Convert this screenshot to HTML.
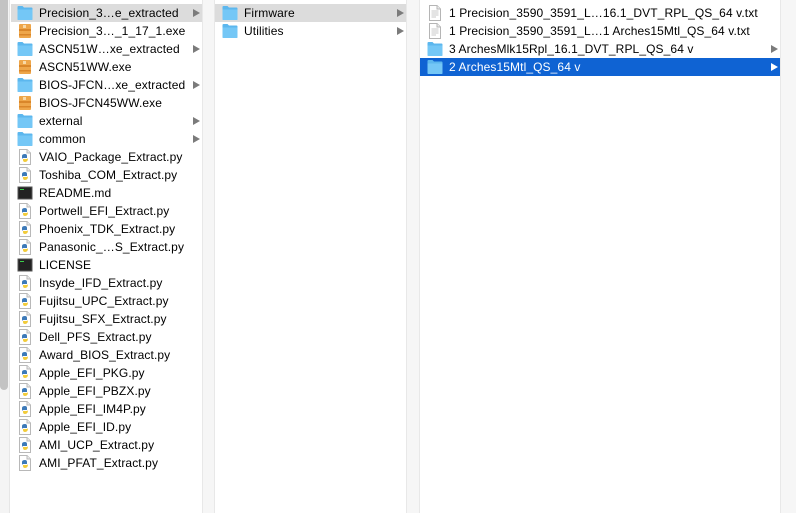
<!DOCTYPE html>
<html><head><meta charset="utf-8"><style>
*{margin:0;padding:0;box-sizing:border-box}
body{width:796px;height:513px;overflow:hidden;background:#fff;font-family:"Lucida Grande","Liberation Sans",sans-serif;font-size:12px;letter-spacing:0.1px;color:#000;position:relative}
.g{position:absolute;top:0;height:513px;background:#f6f6f6;border-left:1px solid #e8e8e8;border-right:1px solid #e8e8e8}
.row{position:absolute;height:18px;line-height:18px;white-space:nowrap}
.row.sel{background:#dcdcdc}
.row.blue{background:#0f63d3;color:#fff}
.row svg{position:absolute;top:1px}
.row span{position:absolute;top:0}
.arr{position:absolute;top:5px;width:0;height:0;border-top:4px solid transparent;border-bottom:4px solid transparent;border-left:7px solid #7b7b7b}
.blue .arr{border-left-color:#fff}
#w{position:absolute;left:0;top:1px;width:796px;height:512px}
</style></head><body>
<div style="position:absolute;left:0;top:0;width:10px;height:513px;background:#f4f4f4;border-right:1px solid #e6e6e6"></div>
<div style="position:absolute;left:0;top:0;width:8px;height:390px;background:#c3c3c3;border-radius:0 0 4px 4px"></div>
<div class="g" style="left:202px;width:13px"></div>
<div class="g" style="left:406px;width:14px"></div>
<div class="g" style="left:780px;width:16px;border-right:none"></div>

<svg width="0" height="0" style="position:absolute">
<defs>
<symbol id="fd" viewBox="0 0 16 16"><path d="M0.5 3.5 V2 Q0.5 1 1.5 1 H5.5 L7 2.5 H14.5 Q15.5 2.5 15.5 3.5 V14 Q15.5 15 14.5 15 H1.5 Q0.5 15 0.5 14 Z" fill="#5cb7ee"/><path d="M0.5 4.5 H15.5 V14 Q15.5 15 14.5 15 H1.5 Q0.5 15 0.5 14 Z" fill="#74c7f6"/></symbol>
<symbol id="ex" viewBox="0 0 16 16"><rect x="2" y="1" width="12" height="14" rx="1" fill="#eea64a"/><rect x="2" y="6" width="12" height="2" fill="#d9862a"/><rect x="2" y="11" width="12" height="1.5" fill="#d9862a"/><rect x="6" y="2" width="3" height="3" fill="#f8d9a8"/></symbol>
<symbol id="py" viewBox="0 0 16 16"><path d="M2.5 0.5 H10 L13.5 4 V15.5 H2.5 Z" fill="#fff" stroke="#b8b8b8"/><path d="M10 0.5 V4 H13.5" fill="#eee" stroke="#b8b8b8"/><path d="M5 7 Q5 5 8 5 Q10 5 10 7 V9 H6.5 Q5 9 5 10.5 Z" fill="#3d7ab8"/><path d="M11 9 Q11 13 8 13 Q6 13 6 11 V10 H9.5 Q11 10 11 8.5 Z" fill="#f2cc3a"/></symbol>
<symbol id="tm" viewBox="0 0 16 16"><rect x="1" y="2" width="14" height="12" fill="#222" stroke="#555"/><rect x="3" y="4" width="4" height="1" fill="#3ad14a"/></symbol>
<symbol id="tx" viewBox="0 0 16 16"><path d="M2.5 0.5 H10 L13.5 4 V15.5 H2.5 Z" fill="#fff" stroke="#b5b5b5"/><path d="M10 0.5 V4 H13.5" fill="#eee" stroke="#b5b5b5"/><path d="M4.5 6 H11.5 M4.5 8 H11.5 M4.5 10 H11.5 M4.5 12 H9" stroke="#c8c8c8"/></symbol>
</defs></svg>
<div id="w">
<!-- column 1 -->
<div class="row sel" style="left:11px;width:191px;top:3px"><svg style="left:6px" width="16" height="16"><use href="#fd"/></svg><span style="left:28px">Precision_3…e_extracted</span><i class="arr" style="left:182px"></i></div>
<div class="row" style="left:11px;width:191px;top:21px"><svg style="left:6px" width="16" height="16"><use href="#ex"/></svg><span style="left:28px">Precision_3…_1_17_1.exe</span></div>
<div class="row" style="left:11px;width:191px;top:39px"><svg style="left:6px" width="16" height="16"><use href="#fd"/></svg><span style="left:28px">ASCN51W…xe_extracted</span><i class="arr" style="left:182px"></i></div>
<div class="row" style="left:11px;width:191px;top:57px"><svg style="left:6px" width="16" height="16"><use href="#ex"/></svg><span style="left:28px">ASCN51WW.exe</span></div>
<div class="row" style="left:11px;width:191px;top:75px"><svg style="left:6px" width="16" height="16"><use href="#fd"/></svg><span style="left:28px">BIOS-JFCN…xe_extracted</span><i class="arr" style="left:182px"></i></div>
<div class="row" style="left:11px;width:191px;top:93px"><svg style="left:6px" width="16" height="16"><use href="#ex"/></svg><span style="left:28px">BIOS-JFCN45WW.exe</span></div>
<div class="row" style="left:11px;width:191px;top:111px"><svg style="left:6px" width="16" height="16"><use href="#fd"/></svg><span style="left:28px">external</span><i class="arr" style="left:182px"></i></div>
<div class="row" style="left:11px;width:191px;top:129px"><svg style="left:6px" width="16" height="16"><use href="#fd"/></svg><span style="left:28px">common</span><i class="arr" style="left:182px"></i></div>
<div class="row" style="left:11px;width:191px;top:147px"><svg style="left:6px" width="16" height="16"><use href="#py"/></svg><span style="left:28px">VAIO_Package_Extract.py</span></div>
<div class="row" style="left:11px;width:191px;top:165px"><svg style="left:6px" width="16" height="16"><use href="#py"/></svg><span style="left:28px">Toshiba_COM_Extract.py</span></div>
<div class="row" style="left:11px;width:191px;top:183px"><svg style="left:6px" width="16" height="16"><use href="#tm"/></svg><span style="left:28px">README.md</span></div>
<div class="row" style="left:11px;width:191px;top:201px"><svg style="left:6px" width="16" height="16"><use href="#py"/></svg><span style="left:28px">Portwell_EFI_Extract.py</span></div>
<div class="row" style="left:11px;width:191px;top:219px"><svg style="left:6px" width="16" height="16"><use href="#py"/></svg><span style="left:28px">Phoenix_TDK_Extract.py</span></div>
<div class="row" style="left:11px;width:191px;top:237px"><svg style="left:6px" width="16" height="16"><use href="#py"/></svg><span style="left:28px">Panasonic_…S_Extract.py</span></div>
<div class="row" style="left:11px;width:191px;top:255px"><svg style="left:6px" width="16" height="16"><use href="#tm"/></svg><span style="left:28px">LICENSE</span></div>
<div class="row" style="left:11px;width:191px;top:273px"><svg style="left:6px" width="16" height="16"><use href="#py"/></svg><span style="left:28px">Insyde_IFD_Extract.py</span></div>
<div class="row" style="left:11px;width:191px;top:291px"><svg style="left:6px" width="16" height="16"><use href="#py"/></svg><span style="left:28px">Fujitsu_UPC_Extract.py</span></div>
<div class="row" style="left:11px;width:191px;top:309px"><svg style="left:6px" width="16" height="16"><use href="#py"/></svg><span style="left:28px">Fujitsu_SFX_Extract.py</span></div>
<div class="row" style="left:11px;width:191px;top:327px"><svg style="left:6px" width="16" height="16"><use href="#py"/></svg><span style="left:28px">Dell_PFS_Extract.py</span></div>
<div class="row" style="left:11px;width:191px;top:345px"><svg style="left:6px" width="16" height="16"><use href="#py"/></svg><span style="left:28px">Award_BIOS_Extract.py</span></div>
<div class="row" style="left:11px;width:191px;top:363px"><svg style="left:6px" width="16" height="16"><use href="#py"/></svg><span style="left:28px">Apple_EFI_PKG.py</span></div>
<div class="row" style="left:11px;width:191px;top:381px"><svg style="left:6px" width="16" height="16"><use href="#py"/></svg><span style="left:28px">Apple_EFI_PBZX.py</span></div>
<div class="row" style="left:11px;width:191px;top:399px"><svg style="left:6px" width="16" height="16"><use href="#py"/></svg><span style="left:28px">Apple_EFI_IM4P.py</span></div>
<div class="row" style="left:11px;width:191px;top:417px"><svg style="left:6px" width="16" height="16"><use href="#py"/></svg><span style="left:28px">Apple_EFI_ID.py</span></div>
<div class="row" style="left:11px;width:191px;top:435px"><svg style="left:6px" width="16" height="16"><use href="#py"/></svg><span style="left:28px">AMI_UCP_Extract.py</span></div>
<div class="row" style="left:11px;width:191px;top:453px"><svg style="left:6px" width="16" height="16"><use href="#py"/></svg><span style="left:28px">AMI_PFAT_Extract.py</span></div>

<!-- column 2 -->
<div class="row sel" style="left:215px;width:191px;top:3px"><svg style="left:7px" width="16" height="16"><use href="#fd"/></svg><span style="left:29px">Firmware</span><i class="arr" style="left:182px"></i></div>
<div class="row" style="left:215px;width:191px;top:21px"><svg style="left:7px" width="16" height="16"><use href="#fd"/></svg><span style="left:29px">Utilities</span><i class="arr" style="left:182px"></i></div>

<!-- column 3 -->
<div class="row" style="left:420px;width:360px;top:3px"><svg style="left:7px" width="16" height="16"><use href="#tx"/></svg><span style="left:29px">1 Precision_3590_3591_L…16.1_DVT_RPL_QS_64 v.txt</span></div>
<div class="row" style="left:420px;width:360px;top:21px"><svg style="left:7px" width="16" height="16"><use href="#tx"/></svg><span style="left:29px">1 Precision_3590_3591_L…1 Arches15Mtl_QS_64 v.txt</span></div>
<div class="row" style="left:420px;width:360px;top:39px"><svg style="left:7px" width="16" height="16"><use href="#fd"/></svg><span style="left:29px">3 ArchesMlk15Rpl_16.1_DVT_RPL_QS_64 v</span><i class="arr" style="left:351px"></i></div>
<div class="row blue" style="left:420px;width:360px;top:57px"><svg style="left:7px" width="16" height="16"><use href="#fd"/></svg><span style="left:29px">2 Arches15Mtl_QS_64 v</span><i class="arr" style="left:351px"></i></div>
</div>
</body></html>
